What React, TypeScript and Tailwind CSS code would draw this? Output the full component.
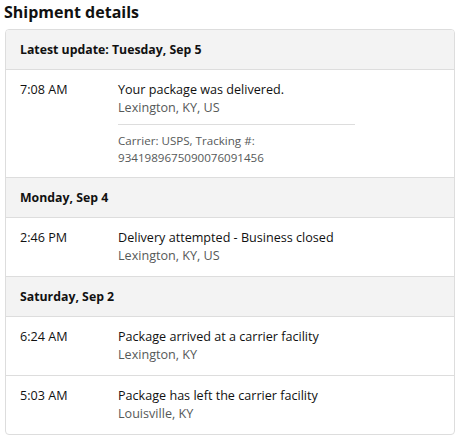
const font = { fontFamily: '"Open Sans", "Liberation Sans", sans-serif' };

type Event = {
  time: string;
  title: string;
  location: string;
  carrier?: boolean;
};

type Group = { label: string; events: Event[] };

const GROUPS: Group[] = [
  {
    label: 'Latest update: Tuesday, Sep 5',
    events: [
      {
        time: '7:08 AM',
        title: 'Your package was delivered.',
        location: 'Lexington, KY, US',
        carrier: true,
      },
    ],
  },
  {
    label: 'Monday, Sep 4',
    events: [
      {
        time: '2:46 PM',
        title: 'Delivery attempted - Business closed',
        location: 'Lexington, KY, US',
      },
    ],
  },
  {
    label: 'Saturday, Sep 2',
    events: [
      {
        time: '6:24 AM',
        title: 'Package arrived at a carrier facility',
        location: 'Lexington, KY',
      },
      {
        time: '5:03 AM',
        title: 'Package has left the carrier facility',
        location: 'Louisville, KY',
      },
    ],
  },
];

function EventRow({ event }: { event: Event }) {
  return (
    <div className="flex border-t border-[#dddddd] px-[14px] pt-[11px] pb-[11px]">
      <div className="w-[98px] shrink-0 text-[12.6px] leading-[18px] text-[#111111]">{event.time}</div>
      <div className="flex flex-col">
        <div className="text-[12.6px] leading-[18px] text-[#111111]">{event.title}</div>
        <div className="text-[12.6px] leading-[18px] text-[#565959]">{event.location}</div>
        {event.carrier && (
          <div className="mt-[7px] w-[237px] border-t border-[#dddddd] pt-[7px] text-[11.6px] leading-[17px] text-[#565959]">
            <div>Carrier: USPS, Tracking #:</div>
            <div>9341989675090076091456</div>
          </div>
        )}
      </div>
    </div>
  );
}

export default function App() {
  return (
    <div className="w-[455px] h-[436px] overflow-hidden bg-white" style={font}>
      <h2 className="pl-[4px] pt-[2px] text-[16px] font-bold leading-[20px] text-[#111111]">Shipment details</h2>
      <div className="ml-[5px] mt-[7px] w-[450px] overflow-hidden rounded-[4px] border border-[#dddddd]">
        {GROUPS.map((group, i) => (
          <div key={group.label}>
            <div
              className={`bg-[#f3f3f3] px-[14px] py-[10px] text-[12.3px] font-bold leading-[19px] text-[#111111] ${
                i > 0 ? 'border-t border-[#dddddd]' : ''
              }`}
            >
              {group.label}
            </div>
            {group.events.map((event) => (
              <EventRow key={event.time} event={event} />
            ))}
          </div>
        ))}
      </div>
    </div>
  );
}
